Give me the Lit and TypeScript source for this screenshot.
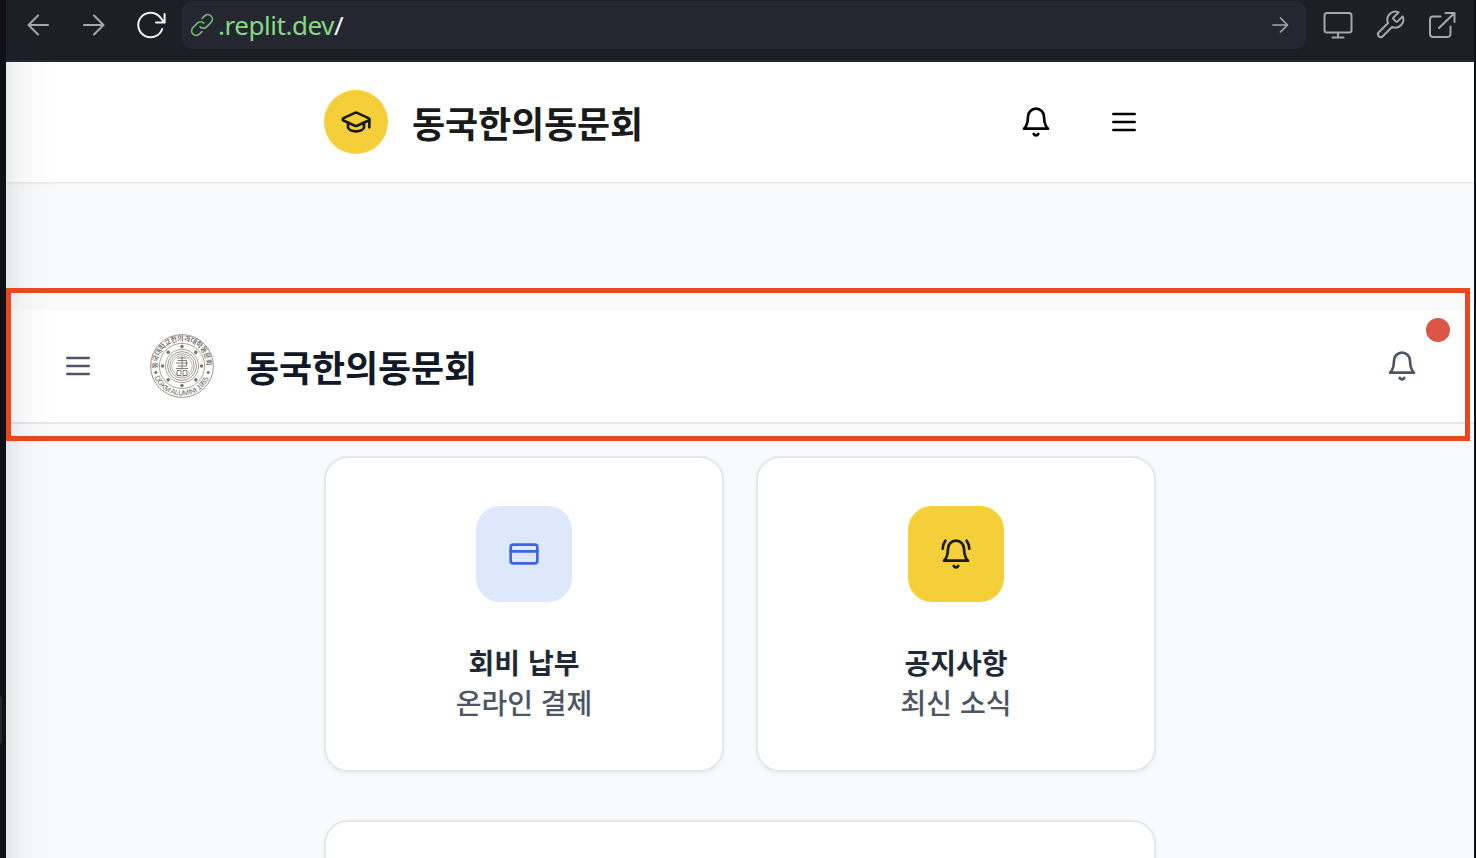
import { LitElement, html, css, svg } from "lit";
import { customElement } from "lit/decorators.js";

const bell = svg`<path d="M6 8a6 6 0 0 1 12 0c0 7 3 9 3 9H3s3-2 3-9"/><path d="M10.3 21a1.94 1.94 0 0 0 3.4 0"/>`;
const rings = svg`<path d="M4 2C2.8 3.7 2 5.7 2 8"/><path d="M22 8c0-2.3-.8-4.3-2-6"/>`;
const menu = svg`<path d="M4 6h16M4 12h16M4 18h16"/>`;
const cap = svg`<path d="M21.42 10.922a1 1 0 0 0-.019-1.838L12.83 5.18a2 2 0 0 0-1.66 0L2.6 9.08a1 1 0 0 0 0 1.832l8.57 3.908a2 2 0 0 0 1.66 0z"/><path d="M22 10v6"/><path d="M6 12.5V16a6 3 0 0 0 12 0v-3.5"/>`;
const card = svg`<rect width="20" height="14" x="2" y="5" rx="2"/><path d="M2 10h20"/>`;
const icon = (shape: unknown) => html`<svg class="icon" viewBox="0 0 24 24">${shape}</svg>`;
const dots = [0, 45, 90, 135, 180, 225, 270, 315];

@customElement("alumni-seal")
class AlumniSeal extends LitElement {
  static styles = css`
    :host { display: block; width: 64px; height: 64px; }
    svg { display: block; }
    .ring { fill: none; stroke: #8e8983; }
    .glyph { fill: none; stroke: #77716a; stroke-width: 0.9; }
    .dot { fill: #77716a; }
    .ko { font: 500 7.2px "Noto Sans CJK KR", sans-serif; fill: #5f5952; }
    .en { font: 7.2px "Liberation Sans", sans-serif; fill: #6a645d; }
  `;
  render() {
    return html`<svg width="64" height="64" viewBox="0 0 64 64">
      <defs>
        <path id="top" d="M7.8 34.5A24.4 24.4 0 1 1 56.2 34.5"/>
        <path id="bottom" d="M3.4 39.5A29.6 29.6 0 0 0 60.6 39.5"/>
      </defs>
      <circle class="ring" cx="32" cy="32" r="31.4" stroke-width="0.9"/>
      <circle class="ring" cx="32" cy="32" r="22.6" stroke-width="0.8"/>
      <circle class="ring" cx="32" cy="32" r="16.6" stroke-width="0.8"/>
      <circle class="ring" cx="32" cy="32" r="14.4" stroke-width="0.9"/>
      <circle class="ring" cx="32" cy="32" r="12.2" stroke-width="0.8"/>
      <circle class="ring" cx="32" cy="32" r="10.3" stroke-width="0.6"/>
      ${dots.map((a) => svg`<circle class="dot" cx="32" cy="12.5" r="1.7" transform="rotate(${a} 32 32)"/>`)}
      <circle class="dot" cx="5.8" cy="38.5" r="1.5"/>
      <circle class="dot" cx="58.2" cy="38.5" r="1.5"/>
      <path class="glyph" d="M27.500 24h9M32 22.500v13M27.500 26.500h9v5.500M26 29h12M27.500 32h9M26 34.500h12M27 36.500h4v5h-4zM33 36.500h4v5h-4z"/>
      <text class="ko"><textPath href="#top" textLength="80">동국대학교한의과대학동문회</textPath></text>
      <text class="en"><textPath href="#bottom" startOffset="4" textLength="68">DGKM ALUMINI 1955</textPath></text>
    </svg>`;
  }
}

@customElement("app-root")
class AppRoot extends LitElement {
  static styles = css`
    :host {
      display: block; position: relative; box-sizing: border-box; height: 858px; overflow: hidden;
      padding: 0 2px 0 6px; background: #0f1018; color: #1a1a1a;
      font-family: "Noto Sans CJK KR", sans-serif;
    }
    * { box-sizing: border-box; }
    svg { display: block; flex: none; }
    .icon { width: 32px; height: 32px; fill: none; stroke: currentColor; stroke-width: 2; stroke-linecap: round; stroke-linejoin: round; }
    .toolbar { height: 62px; background: #1c1f26; border-bottom: 2px solid #282433; display: flex; align-items: flex-start; color: #a4a7b0; }
    .toolbar svg { fill: none; stroke: currentColor; stroke-width: 2; stroke-linecap: round; stroke-linejoin: round; }
    .nav { display: flex; gap: 24px; padding: 9px 0 0 16px; width: 176px; }
    .nav .reload { color: #f2f3f5; }
    .address { width: 1124px; height: 48px; margin-top: 1px; border-radius: 10px; background: #242730; display: flex; align-items: center; padding: 0 14px 0 7px; }
    .link { color: #70bf70; }
    .host { color: #86d884; font: 26px/48px "Noto Sans", sans-serif; letter-spacing: -0.45px; margin-left: 3px; flex: 1; white-space: nowrap; }
    .slash { color: #f5f9fc; }
    .tools { display: flex; gap: 20px; padding: 9px 0 0 16px; }
    .page { position: relative; height: 796px; background: #f9fafc; overflow: hidden; }
    .shade { position: absolute; inset: 0 auto 0 0; width: 48px; background: linear-gradient(90deg, rgba(0,0,0,.08), rgba(0,0,0,.036) 30%, rgba(0,0,0,.012) 62%, transparent); }
    .header { height: 120px; background: #fff; box-shadow: 0 1px 3px rgba(0,0,0,.1); display: flex; align-items: center; padding: 0 334px 0 318px; }
    .mark { width: 64px; height: 64px; border-radius: 50%; background: #f5cf3a; display: grid; place-items: center; }
    .title { font-size: 36px; line-height: 56px; font-weight: 700; letter-spacing: -0.1px; white-space: nowrap; flex: 1; }
    .header .title { margin-left: 24px; }
    .actions { display: flex; gap: 56px; color: #050505; }
    .alumni { height: 114px; margin-top: 128px; background: #fff; border-bottom: 2px solid #e5e7eb; display: flex; align-items: center; padding: 0 56px; color: #4b5563; }
    .alumni alumni-seal { margin-left: 56px; }
    .alumni .title { margin-left: 32px; color: #111827; }
    .grid { display: grid; grid-template-columns: 400px 400px; gap: 48px 32px; padding: 32px 0 0 318px; }
    .card { height: 316px; background: #fff; border: 2px solid #e5e7eb; border-radius: 24px; box-shadow: 0 2px 4px rgba(0,0,0,.05); display: flex; flex-direction: column; align-items: center; padding-top: 48px; font-size: 28px; line-height: 40px; word-spacing: 1.6px; }
    .tile { width: 96px; height: 96px; border-radius: 24px; display: grid; place-items: center; margin-bottom: 40px; }
    .blue { background: #dde8fd; color: #3e63e6; }
    .yellow { background: #f5cf3a; color: #1a1a1a; }
    .name { font-weight: 700; color: #1f2937; }
    .note { font-weight: 500; color: #4b5563; }
    .wide { grid-column: 1 / 3; }
    .outline { position: absolute; left: 6px; top: 288px; width: 1464px; height: 153px; border: 5px solid #e9471f; }
    .badge { position: absolute; left: 1426px; top: 318px; width: 24px; height: 24px; border-radius: 50%; background: #db5648; }
    .handle { position: absolute; left: 0; top: 696px; width: 2px; height: 48px; background: #242730; border-radius: 0 2px 2px 0; }
  `;

  render() {
    return html`
      <div class="toolbar">
        <div class="nav">
          <svg width="32" height="32"><path d="M26 16H6.500M16 6.500L6.500 16l9.500 9.500"/></svg>
          <svg width="32" height="32"><path d="M6 16h19.500M16 6.500l9.500 9.500-9.500 9.500"/></svg>
          <svg class="reload" width="32" height="32"><path d="M28.200 20A12.300 12.300 0 1 1 25.500 7.500L29.500 12.500M30.600 5v8.500H22" stroke-linejoin="miter"/></svg>
        </div>
        <div class="address">
          <svg class="link" width="26" height="26" viewBox="0 0 24 24"><path stroke-width="1.5" d="M10.300 13.700a4.200 4.200 0 0 0 6 0l4.200-4.200a4.250 4.250 0 0 0-6-6l-2.400 2.400M13.700 10.300a4.200 4.200 0 0 0-6 0l-4.200 4.200a4.250 4.250 0 0 0 6 6l2.400-2.400"/></svg>
          <span class="host">.replit.dev<span class="slash">/</span></span>
          <svg width="24" height="24"><path stroke-width="1.7" d="M5 12h14.500M12.500 5l7 7-7 7"/></svg>
        </div>
        <div class="tools">
          <svg width="32" height="32"><rect x="2.500" y="4" width="27" height="19.500" rx="2.500"/><path d="M16 24v4.500M10.500 28.500h11"/></svg>
          <svg width="32" height="32" viewBox="0 0 24 24"><path stroke-width="1.5" d="M14.700 6.300a1 1 0 0 0 0 1.400l1.600 1.600a1 1 0 0 0 1.400 0l3.770-3.770a6 6 0 0 1-7.940 7.940l-6.910 6.910a2.120 2.120 0 0 1-3-3l6.910-6.910a6 6 0 0 1 7.940-7.940l-3.760 3.760z"/></svg>
          <svg width="32" height="32"><path d="M14.500 7.500H7a3 3 0 0 0-3 3V25a3 3 0 0 0 3 3H21.500a3 3 0 0 0 3-3V17.500M19.500 4H28.500v9M28 4.500L13 19"/></svg>
        </div>
      </div>
      <div class="page">
        <header class="header">
          <div class="mark">${icon(cap)}</div>
          <div class="title">동국한의동문회</div>
          <div class="actions">${icon(bell)}${icon(menu)}</div>
        </header>
        <header class="alumni">
          ${icon(menu)}
          <alumni-seal></alumni-seal>
          <div class="title">동국한의동문회</div>
          ${icon(bell)}
        </header>
        <main class="grid">
          <div class="card"><div class="tile blue">${icon(card)}</div><div class="name">회비 납부</div><div class="note">온라인 결제</div></div>
          <div class="card"><div class="tile yellow">${icon(svg`${bell}${rings}`)}</div><div class="name">공지사항</div><div class="note">최신 소식</div></div>
          <div class="card wide"></div>
        </main>
        <div class="shade"></div>
      </div>
      <div class="outline"></div>
      <div class="badge"></div>
      <div class="handle"></div>
    `;
  }
}
